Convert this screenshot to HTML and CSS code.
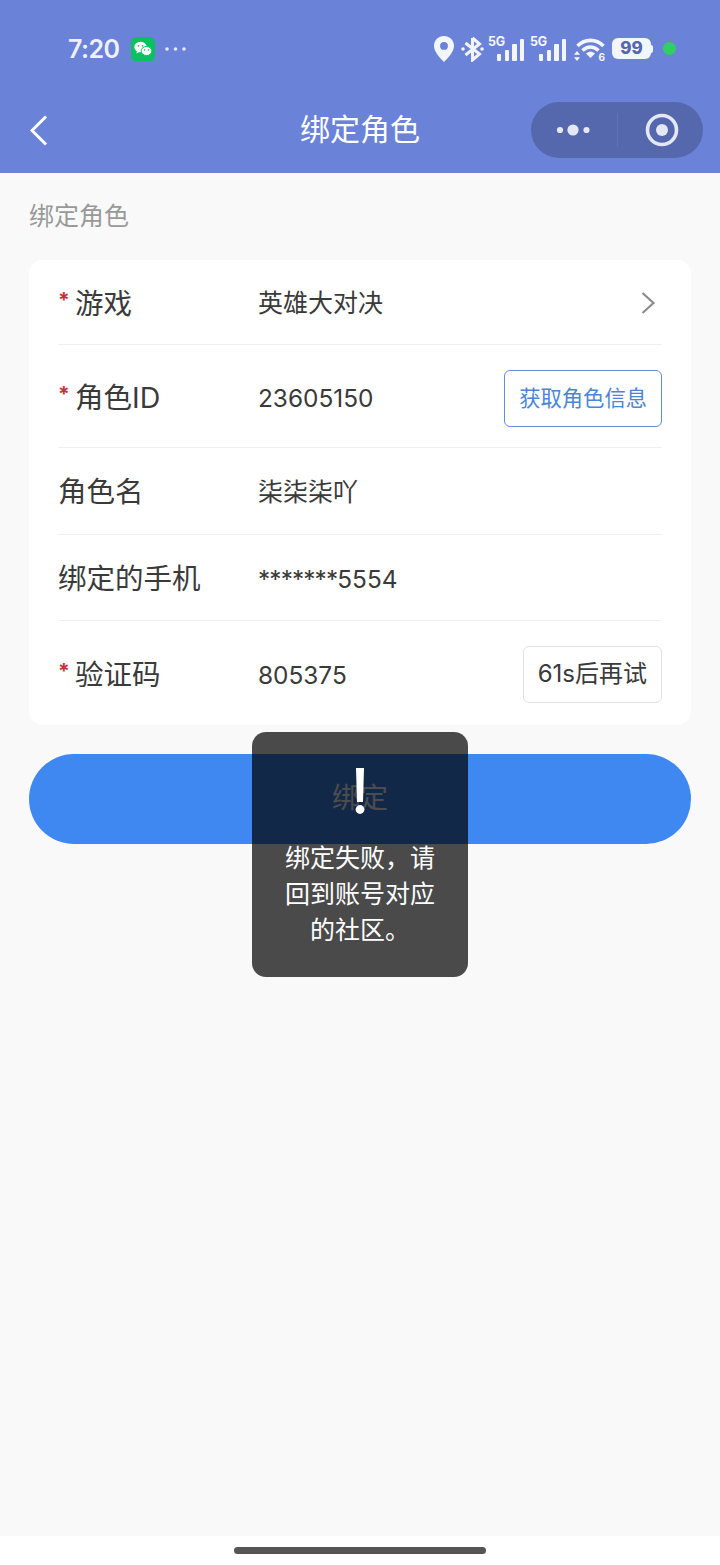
FILE: index.html
```html
<!DOCTYPE html>
<html lang="zh-CN">
<head>
<meta charset="utf-8">
<title>绑定角色</title>
<link rel="stylesheet" href="styles.css">
</head>
<body>
<div class="page">
  <header class="header">
    <div class="status">
      <div class="status-left">
        <span class="time">7:20</span>
        <svg class="wechat" width="24" height="24" viewBox="0 0 24 24"><rect width="24" height="24" rx="5" fill="#0ac160"/><ellipse cx="9.500" cy="10" rx="6.200" ry="5.200" fill="#fff"/><path d="M6 14l-.6 2.600 3-1.600z" fill="#fff"/><ellipse cx="15.500" cy="14" rx="5.400" ry="4.500" fill="#fff" stroke="#0ac160" stroke-width="1"/><circle cx="7.500" cy="8.800" r=".9" fill="#0ac160"/><circle cx="11.500" cy="8.800" r=".9" fill="#0ac160"/><circle cx="13.600" cy="13" r=".8" fill="#0ac160"/><circle cx="17.400" cy="13" r=".8" fill="#0ac160"/></svg>
        <svg class="more-dots" width="21" height="4" viewBox="0 0 21 4"><circle cx="2" cy="2" r="1.800" fill="#e6e9f8"/><circle cx="10.500" cy="2" r="1.800" fill="#e6e9f8"/><circle cx="19" cy="2" r="1.800" fill="#e6e9f8"/></svg>
      </div>
      <div class="status-right">
        <svg class="pin" width="20" height="26" viewBox="0 0 20 26"><path fill-rule="evenodd" d="M10 0c5.600 0 10 4.300 10 9.800 0 6-5.600 11.800-10 16.200C5.600 21.600 0 15.800 0 9.800 0 4.300 4.400 0 10 0zm0 6a3.900 3.900 0 1 0 0 7.800A3.900 3.900 0 0 0 10 6z" fill="#f3f5fc"/></svg>
        <svg class="bt" width="23" height="26" viewBox="0 0 23 26"><path d="M11.500 2v22l7-6L4.500 7M11.500 2l7 6L4.500 19" fill="none" stroke="#f3f5fc" stroke-width="3"/><circle cx="2" cy="13" r="1.800" fill="#f3f5fc"/><circle cx="21" cy="13" r="1.800" fill="#f3f5fc"/></svg>
        <span class="signal">
          <span class="five-g">5G</span>
          <span class="bar bar-1"></span><span class="bar bar-2"></span><span class="bar bar-3"></span><span class="bar bar-4"></span>
        </span>
        <span class="signal">
          <span class="five-g">5G</span>
          <span class="bar bar-1"></span><span class="bar bar-2"></span><span class="bar bar-3"></span><span class="bar bar-4"></span>
        </span>
        <svg class="wifi" width="31" height="24" viewBox="0 0 31 24"><path d="M3.500 9C11 1.500 22 1.500 29.500 9M8.500 13.500c5-4.500 11-4.500 16 0" fill="none" stroke="#f3f5fc" stroke-width="3.600"/><path d="M12 16.500c3-2.400 6-2.400 9 0L16.500 21z" fill="#f3f5fc"/><path d="M3 14l3 3.800H0zM3 24l3-3.800H0z" fill="#f3f5fc"/><text x="24.500" y="23.500" class="wifi-six">6</text></svg>
        <span class="battery"><span class="battery-body">99</span><span class="battery-cap"></span></span>
        <span class="green-dot"></span>
      </div>
    </div>
    <nav class="nav">
      <div class="nav-left">
        <svg width="18" height="31" viewBox="0 0 18 31"><path d="M16 1.500L2 15.500l14 14" fill="none" stroke="#fff" stroke-width="3"/></svg>
      </div>
      <h1 class="nav-title">绑定角色</h1>
      <div class="nav-right">
        <div class="capsule">
          <svg class="capsule-more" width="36" height="12" viewBox="0 0 36 12"><circle cx="4" cy="6" r="3.100" fill="#e4e7f5"/><circle cx="17" cy="6" r="5.600" fill="#e4e7f5"/><circle cx="30.500" cy="6" r="3.100" fill="#e4e7f5"/></svg>
          <span class="capsule-line"></span>
          <svg class="capsule-close" width="34" height="34" viewBox="0 0 34 34"><circle cx="17" cy="17" r="14.500" fill="none" stroke="#e4e7f5" stroke-width="3.600"/><circle cx="17" cy="17" r="6" fill="#e4e7f5"/></svg>
        </div>
      </div>
    </nav>
  </header>

  <main class="main">
    <h2 class="section-title">绑定角色</h2>
    <section class="card">
      <div class="row row-select">
        <div class="label"><span class="req">*</span>游戏</div>
        <div class="value">英雄大对决</div>
        <svg class="row-arrow" width="16" height="24" viewBox="0 0 16 24"><path d="M2.500 2l11 10-11 10" fill="none" stroke="#8c8c8c" stroke-width="2.200"/></svg>
      </div>
      <div class="row row-action">
        <div class="label"><span class="req">*</span>角色ID</div>
        <div class="value value-num">23605150</div>
        <button class="btn btn-blue">获取角色信息</button>
      </div>
      <div class="row row-text-a">
        <div class="label">角色名</div>
        <div class="value">柒柒柒吖</div>
      </div>
      <div class="row row-text-b">
        <div class="label">绑定的手机</div>
        <div class="value value-num"><span class="mask">*******</span>5554</div>
      </div>
      <div class="row row-last">
        <div class="label"><span class="req">*</span>验证码</div>
        <div class="value value-num">805375</div>
        <button class="btn btn-gray">61s后再试</button>
      </div>
    </section>
    <button class="submit">绑定</button>
  </main>

  <footer class="home-area"><span class="home-bar"></span></footer>

  <div class="toast">
    <svg class="toast-icon" width="14" height="48" viewBox="0 0 14 48"><path d="M3 1h8L10 35H4z" fill="#fff"/><circle cx="7" cy="42.500" r="4.400" fill="#fff"/></svg>
    <p class="toast-text">绑定失败，请回到账号对应的社区。</p>
  </div>
</div>
</body>
</html>
```

FILE: styles.css
```css
* { box-sizing: border-box; }
html, body { margin: 0; padding: 0; }
body {
  font-family: Inter, "Noto Sans CJK SC", sans-serif;
  background: #fff;
  color: #3a3a3a;
}
.page {
  position: relative;
  width: 720px;
  height: 1565px;
  display: flex;
  flex-direction: column;
  overflow: hidden;
}
.header {
  height: 173px;
  flex: none;
  background: #6b82d9;
  color: #fff;
}
.status {
  height: 92px;
  padding: 5px 44px 0 68px;
  display: flex;
  align-items: center;
  justify-content: space-between;
}
.status-left, .status-right { display: flex; align-items: center; }
.time {
  font-size: 25px;
  font-weight: 600;
  line-height: 30px;
  width: 63px;
  color: #eef0fb;
  letter-spacing: -.5px;
}
.wechat { flex: none; }
.more-dots { margin-left: 10px; }
.pin { margin-right: 7px; }
.bt { margin-right: 4px; }
.signal {
  position: relative;
  display: flex;
  align-items: flex-end;
  gap: 3.200px;
  width: 37px;
  height: 24px;
  padding-left: 9px;
  margin-right: 5px;
}
.five-g {
  position: absolute;
  left: 0;
  top: -1px;
  font-size: 12.500px;
  line-height: 12px;
  font-weight: 700;
  letter-spacing: -.3px;
  color: #f3f5fc;
}
.bar { width: 4.400px; background: #f3f5fc; border-radius: 1px; }
.bar-1 { height: 7px; }
.bar-2 { height: 11px; }
.bar-3 { height: 17px; }
.bar-4 { height: 22px; }
.wifi { margin-left: 2px; margin-right: 7px; }
.wifi-six { font-size: 10px; font-weight: 700; fill: #f3f5fc; }
.battery { display: flex; align-items: center; }
.battery-body {
  width: 39px;
  height: 21px;
  border-radius: 6px;
  background: #f3f5fc;
  color: #5568ae;
  font-size: 17px;
  font-weight: 800;
  line-height: 21px;
  text-align: center;
}
.battery-cap { width: 2px; height: 8px; background: #f3f5fc; border-radius: 0 2px 2px 0; }
.green-dot {
  width: 13px;
  height: 13px;
  border-radius: 50%;
  background: #2fd05f;
  margin-left: 10px;
}
.nav {
  height: 76px;
  display: grid;
  grid-template-columns: 1fr auto 1fr;
  align-items: center;
  padding: 0 17px;
}
.nav-left { display: flex; align-items: center; height: 31px; padding-left: 13px; }
.nav-title {
  margin: 0 0 6px;
  font-size: 30px;
  font-weight: 400;
  line-height: 40px;
  color: #fff;
  font-family: "Noto Sans CJK SC", sans-serif;
}
.nav-right { display: flex; justify-content: flex-end; }
.capsule {
  width: 172px;
  height: 56px;
  border-radius: 28px;
  background: #5568ae;
  display: flex;
  align-items: center;
  padding-left: 25px;
}
.capsule-more { flex: none; }
.capsule-line { width: 1px; height: 34px; background: #6173b8; margin-left: 25px; }
.capsule-close { margin-left: 27px; }
.main {
  flex: 1;
  background: #f9f9f9;
  padding: 0 29px;
}
.section-title {
  margin: 0;
  padding-top: 24px;
  height: 87px;
  font-size: 25px;
  line-height: 34px;
  font-weight: 400;
  color: #999;
  font-family: "Noto Sans CJK SC", sans-serif;
}
.card {
  background: #fff;
  border-radius: 14px;
  padding: 0 29px;
}
.row {
  display: flex;
  align-items: center;
  padding-top: 4px;
  border-bottom: 1px solid #f0f0f0;
}
.row:last-child { border-bottom: 0; }
.row-select { height: 85px; }
.row-select .value { margin-bottom: 3px; }
.row-action { height: 103px; }
.row-text-a { height: 87px; padding-top: 2px; }
.row-text-b { height: 86px; padding-top: 2px; }
.row-last { height: 104px; }
.label {
  position: relative;
  width: 200px;
  flex: none;
  font-size: 28.500px;
  line-height: 38px;
}
.req {
  display: inline-block;
  width: 17px;
  color: #c8313a;
  font-size: 21px;
  line-height: 1;
  font-weight: 700;
  vertical-align: 6px;
}
.value {
  flex: 1;
  font-size: 25px;
  line-height: 36px;
}
.value-num { font-size: 24.400px; }
.mask { letter-spacing: -.9px; }
.row-arrow { flex: none; margin: 0 6px 2px 0; }
.btn {
  flex: none;
  height: 57px;
  padding: 0 14px;
  background: #fff;
  border-radius: 6px;
  font-family: inherit;
  font-size: 21.300px;
  line-height: 30px;
}
.btn-blue { border: 1px solid #5d90dc; color: #4a86d8; }
.btn-gray { border: 1px solid #e2e2e2; color: #3a3a3a; font-size: 24px; margin-bottom: 2px; }
.submit {
  display: block;
  width: 662px;
  height: 90px;
  margin-top: 29px;
  padding: 0 0 6px;
  border: 0;
  border-radius: 45px;
  background: #3f88f2;
  color: #fff;
  font-family: inherit;
  font-size: 28px;
}
.home-area {
  flex: none;
  height: 29px;
  background: #fff;
  display: flex;
  justify-content: center;
  padding-top: 11px;
}
.home-bar { width: 252px; height: 7px; border-radius: 4px; background: #555; }
.toast {
  position: absolute;
  left: 252px;
  top: 732px;
  width: 216px;
  height: 245px;
  border-radius: 14px;
  background: rgba(0, 0, 0, .7);
  display: flex;
  flex-direction: column;
  align-items: center;
  padding: 35px 30px 0;
}
.toast-icon { flex: none; }
.toast-text {
  margin: 23px 0 0;
  font-size: 25px;
  line-height: 36px;
  text-align: center;
  color: #fff;
  font-family: "Noto Sans CJK SC", sans-serif;
}
```
